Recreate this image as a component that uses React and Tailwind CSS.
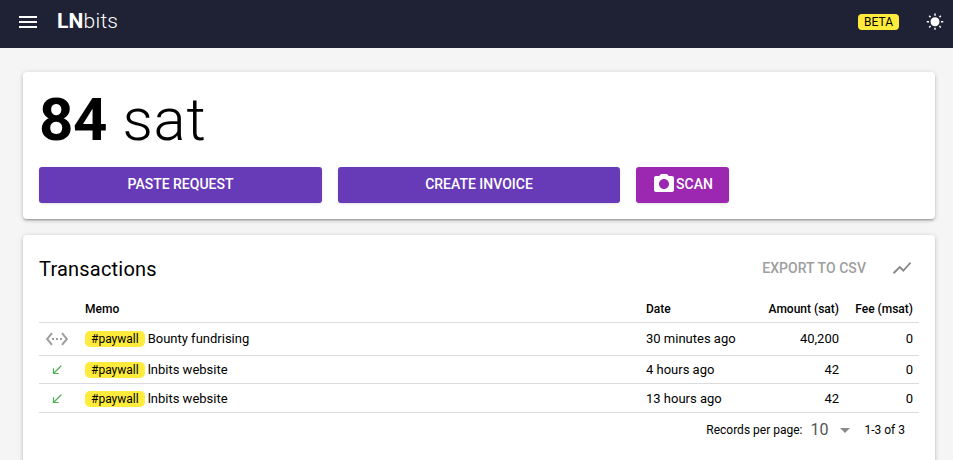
import React from 'react';

const Icon = ({ d, className, children }) => (
  <svg viewBox="0 0 24 24" fill="currentColor" className={className}>
    {d && <path d={d} />}
    {children}
  </svg>
);

const icons = {
  menu: 'M3 18h18v-2H3v2zm0-5h18v-2H3v2zm0-7v2h18V6H3z',
  sun: 'M6.76 4.84l-1.8-1.79-1.41 1.41 1.79 1.79 1.42-1.41zM4 10.5H1v2h3v-2zm9-9.95h-2V3.5h2V.55zm7.45 3.91l-1.41-1.41-1.79 1.79 1.41 1.41 1.79-1.79zm-3.21 13.7l1.79 1.8 1.41-1.41-1.8-1.79-1.4 1.4zM20 10.5v2h3v-2h-3zm-8-5c-3.31 0-6 2.69-6 6s2.69 6 6 6 6-2.69 6-6-2.69-6-6-6zm-1 16.95h2V19.5h-2v2.95zm-7.45-3.91l1.41 1.41 1.79-1.8-1.41-1.41-1.79 1.8z',
  camera: 'M9 2L7.17 4H4c-1.1 0-2 .9-2 2v12c0 1.1.9 2 2 2h16c1.1 0 2-.9 2-2V6c0-1.1-.9-2-2-2h-3.17L15 2H9zm3 15c-2.76 0-5-2.24-5-5s2.24-5 5-5 5 2.24 5 5-2.24 5-5 5z',
  chart: 'M3.5 18.49l6-6.01 4 4L22 6.92l-1.41-1.41-7.09 7.97-4-4L2 16.99z',
  received: 'M20 5.41L18.59 4 7 15.59V9H5v10h10v-2H8.41z',
  pending: 'M7.77 6.76L6.23 5.48.82 12l5.41 6.52 1.54-1.28L3.42 12l4.35-5.24zM7 13h2v-2H7v2zm10-2h-2v2h2v-2zm-6 2h2v-2h-2v2zm6.77-7.52l-1.54 1.28L20.58 12l-4.35 5.24 1.54 1.28L23.18 12l-5.41-6.52z',
};

const payments = [
  { icon: 'pending', memo: 'Bounty fundrising', date: '30 minutes ago', amount: '40,200', fee: '0', rowClass: 'h-[33px]' },
  { icon: 'received', memo: 'lnbits website', date: '4 hours ago', amount: '42', fee: '0', rowClass: 'h-[28px] [&>td]:pt-[2px]' },
  { icon: 'received', memo: 'lnbits website', date: '13 hours ago', amount: '42', fee: '0', rowClass: 'h-[29px] [&>td]:pt-[2px]' },
];

const Card = ({ className, children }) => (
  <div className={`bg-white rounded shadow-[0_1px_5px_rgba(0,0,0,0.2),0_2px_2px_rgba(0,0,0,0.14),0_3px_1px_-2px_rgba(0,0,0,0.12)] ${className}`}>
    {children}
  </div>
);

export default function App() {
  return (
    <div className="h-[460px] overflow-hidden bg-[#f5f5f5] font-['Roboto',sans-serif] text-black">
      {/* Toolbar */}
      <header className="h-12 pb-1 bg-[#1f2234] text-white flex items-center pl-4 pr-[9px]">
        <Icon d={icons.menu} className="w-6 h-6" />
        <div className="ml-[17px] text-[21px] tracking-[0.21px]">
          <strong className="font-bold">LN</strong>
          <span className="font-light">bits</span>
        </div>
        <span className="ml-auto bg-[#ffeb3b] text-black text-xs leading-none rounded px-1.5 py-[2px] h-4">BETA</span>
        <Icon d={icons.sun} className="w-[18px] h-[18px] ml-[27px]" />
      </header>

      <main className="px-[23px] pt-6 pr-[18px] flex flex-col gap-4">
        {/* Balance */}
        <Card className="h-[147px] p-4">
          <div className="text-[60px] leading-[60px] mt-[2px] font-[350]">
            <strong className="font-bold tracking-[-0.5px]">84</strong>{' '}
            <span className="ml-px tracking-[0.7px]">sat</span>
          </div>
          <div className="flex gap-4 mt-[17px] text-sm font-medium text-white">
            <button className="w-[283px] h-9 pb-[2px] rounded-[3px] bg-[#673ab7] shadow">PASTE REQUEST</button>
            <button className="w-[282px] h-9 pb-[2px] rounded-[3px] bg-[#673ab7] shadow">CREATE INVOICE</button>
            <button className="w-[93px] h-9 pb-[2px] rounded-[3px] bg-[#9c27b0] shadow flex items-center justify-center">
              <Icon d={icons.camera} className="w-6 h-6" />
              SCAN
            </button>
          </div>
        </Card>

        {/* Transactions */}
        <Card className="h-[240px] pt-4 px-4 pb-0">
          <div className="flex items-center h-9">
            <h5 className="text-xl leading-none tracking-[0.2px]">Transactions</h5>
            <span className="ml-auto pb-[2px] text-sm font-medium tracking-[0.05px] text-[#9e9e9e]">EXPORT TO CSV</span>
            <Icon d={icons.chart} className="w-[22px] h-[22px] ml-[25px] mr-[6px] mb-[2px] text-[#8a8a8a]" />
          </div>

          <table className="w-[880px] mt-[7px] table-fixed border-collapse text-[13px]">
            <thead>
              <tr className="h-[28px] border-b border-[#dcdcdc] text-xs font-medium [&>th]:pt-[2px]">
                <th className="w-[46px]"></th>
                <th className="w-[561px] text-left font-medium">Memo</th>
                <th className="w-[108px] text-left font-medium">Date</th>
                <th className="w-[85px] text-right font-medium">Amount (sat)</th>
                <th className="w-[80px] text-right pr-1.5 font-medium">Fee (msat)</th>
              </tr>
            </thead>
            <tbody>
              {payments.map((p, i) => (
                <tr key={i} className={`${p.rowClass} border-b border-[#dcdcdc]`}>
                  <td>
                    <Icon
                      d={icons[p.icon]}
                      className={p.icon === 'pending'
                        ? 'w-6 h-6 mx-auto -translate-x-[5px] text-[#9e9e9e]'
                        : 'w-[14px] h-[14px] mx-auto -translate-x-[5px] text-[#4caf50]'}
                    />
                  </td>
                  <td>
                    <span className="inline-block bg-[#ffeb3b] rounded-[5px] px-1.5 h-4 leading-4 mr-[3px] text-xs">#paywall</span>
                    {p.memo}
                  </td>
                  <td>{p.date}</td>
                  <td className="text-right">{p.amount}</td>
                  <td className="text-right pr-1.5">{p.fee}</td>
                </tr>
              ))}
            </tbody>
          </table>

          {/* Pagination */}
          <div className="flex items-center justify-end h-[35px] text-xs pr-[14px]">
            <span>Records per page:</span>
            <span className="ml-2 text-base text-[#555]">10</span>
            <svg viewBox="0 0 10 5" className="w-[10px] h-[5px] ml-[12px] fill-[#8a8a8a]"><path d="M0 0l5 5 5-5z" /></svg>
            <span className="ml-[14px]">1-3 of 3</span>
          </div>
        </Card>
      </main>
    </div>
  );
}
